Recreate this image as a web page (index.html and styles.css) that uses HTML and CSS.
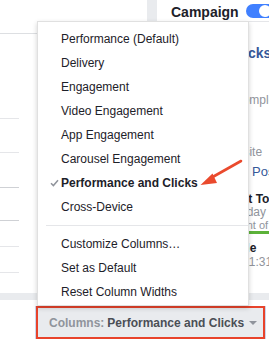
FILE: index.html
```html
<!DOCTYPE html>
<html>
<head>
<meta charset="utf-8">
<link rel="stylesheet" href="styles.css">
</head>
<body>
<div class="app">
  <div class="main">
    <div class="left">
      <div class="left-head"></div>
      <div class="lrow r1"></div>
      <div class="lrow r2"></div>
      <div class="lrow r3 dark"></div>
      <div class="lrow r4 dark"></div>
      <div class="lrow r5"></div>
      <div class="lrow r6"></div>
    </div>
    <div class="gutter"></div>
    <div class="right">
      <div class="rhead">
        <span class="camp">Campaign</span>
        <span class="toggle"><span class="knob"></span></span>
      </div>
      <div class="rt title">Clicks</div>
      <div class="rt grey p-complete">Complete</div>
      <div class="rt grey p-website">Website</div>
      <div class="rt link">Post Engagement</div>
      <div class="rt bold p-spent">Spent Today</div>
      <div class="rt grey p-today">Today</div>
      <div class="rt grey small p-amount">Amount of budget</div>
      <div class="bar"></div>
      <div class="rt bold p-sched">Schedule</div>
      <div class="rt grey p-time">11:31 AM</div>
    </div>
  </div>
  <div class="band"></div>
  <div class="footer">
    <div class="annot">
      <div class="btn"><span class="lbl">Columns:</span><span class="val">Performance and Clicks</span><span class="caret"></span></div>
    </div>
  </div>

  <div class="menu">
    <div class="item">Performance (Default)</div>
    <div class="item">Delivery</div>
    <div class="item">Engagement</div>
    <div class="item">Video Engagement</div>
    <div class="item">App Engagement</div>
    <div class="item">Carousel Engagement</div>
    <div class="item sel"><svg class="check" width="9" height="8" viewBox="0 0 9 8"><polyline points="1,4.2 3.4,6.6 8,1.2" fill="none" stroke="#90949c" stroke-width="1.5"/></svg>Performance and Clicks</div>
    <div class="item">Cross-Device</div>
    <div class="sep"></div>
    <div class="item">Customize Columns…</div>
    <div class="item">Set as Default</div>
    <div class="item">Reset Column Widths</div>
  </div>

  <svg class="arrow" width="269" height="341" viewBox="0 0 269 341">
    <line x1="241" y1="161" x2="210" y2="178.5" stroke="#ea4a2d" stroke-width="2.6" stroke-linecap="round"/>
    <polygon points="200.5,185 212.5,173.5 217,183" fill="#ea4a2d"/>
  </svg>
</div>
</body>
</html>
```

FILE: styles.css
```css
html, body {
  margin: 0;
  padding: 0;
  background: #fff;
}
.app {
  position: relative;
  width: 269px;
  height: 341px;
  overflow: hidden;
  display: flex;
  flex-direction: column;
  font-family: "Liberation Sans", Arial, Helvetica, sans-serif;
  color: #1d2129;
}
.main {
  display: flex;
  height: 293px;
}
.left {
  width: 147px;
  flex: none;
  display: flex;
  flex-direction: column;
}
.left-head {
  height: 33px;
  border-bottom: 1px solid #dddfe2;
}
.lrow {
  width: 19px;
  border-bottom: 1px solid #e5e6e9;
}
.lrow.dark { border-bottom-color: #cfd1d5; }
.r1 { height: 84px; }
.r2 { height: 33px; }
.r3 { height: 34px; }
.r4 { height: 32px; }
.r5 { height: 25px; }
.r6 { height: 25px; }
.gutter {
  width: 10px;
  flex: none;
  background: #e9ebee;
}
.right {
  flex: 1;
  min-width: 0;
  overflow: hidden;
  white-space: nowrap;
  display: flex;
  flex-direction: column;
}
.rhead {
  height: 22px;
  border-bottom: 1px solid #e5e6e9;
  display: flex;
  align-items: center;
  padding-left: 14px;
  padding-top: 2px;
  box-sizing: border-box;
  flex: none;
}
.camp {
  font-size: 14px;
  font-weight: bold;
  color: #1d2129;
  width: 75px;
  flex: none;
}
.toggle {
  position: relative;
  width: 34px;
  height: 14px;
  border-radius: 7px;
  background: #4080ff;
  flex: none;
  margin-top: -2px;
}
.knob {
  position: absolute;
  left: 13px;
  top: 1px;
  width: 12px;
  height: 12px;
  border-radius: 50%;
  background: #fff;
}
.rt {
  font-size: 12px;
  line-height: 14px;
  height: 14px;
  flex: none;
}
.title {
  font-size: 14px;
  font-weight: bold;
  color: #365899;
  margin-top: 24px;
  padding-left: 73px;
}
.grey { color: #90949c; }
.small { font-size: 11px; }
.bold { font-weight: bold; color: #1d2129; }
.link { color: #365899; font-size: 13px; padding-left: 95px; margin-top: 6px; }
.p-complete { margin-top: 33px; padding-left: 77px; }
.p-website { margin-top: 38px; padding-left: 62px; }
.p-spent { margin-top: 14px; padding-left: 62px; line-height: 13px; height: 13px; }
.p-today { padding-left: 77px; line-height: 13px; height: 13px; }
.p-amount { padding-left: 61px; line-height: 12px; height: 12px; }
.bar {
  height: 3px;
  margin-left: 64px;
  background: #5cb239;
  flex: none;
}
.p-sched { margin-top: 7px; padding-left: 46px; }
.p-time { padding-left: 86px; }
.band {
  height: 7px;
  background: #e9ebee;
}
.footer {
  flex: 1;
  padding: 6px 4px 2px 36px;
}
.annot {
  height: 33px;
  border: 2px solid #e8432b;
  box-sizing: border-box;
  box-shadow: 1px 0 0 #c9d6ee, -1px 0 0 #c9d6ee;
}
.btn {
  height: 100%;
  background: #e9ebee;
  display: flex;
  align-items: center;
  padding-left: 11px;
  font-size: 12px;
  font-weight: bold;
  white-space: nowrap;
}
.lbl { color: #90949c; margin-right: 3px; }
.val { color: #4b4f56; }
.caret {
  margin-left: 5px;
  margin-top: 1px;
  width: 0;
  height: 0;
  border-left: 4px solid transparent;
  border-right: 4px solid transparent;
  border-top: 4px solid #90949c;
}
.menu {
  position: absolute;
  left: 37px;
  top: 21px;
  width: 212px;
  height: 285px;
  box-sizing: border-box;
  background: #fff;
  border: 1px solid rgba(0, 0, 0, 0.12);
  box-shadow: 0 2px 5px rgba(0, 0, 0, 0.18);
  padding-top: 5px;
}
.item {
  height: 24px;
  line-height: 24px;
  font-size: 12px;
  color: #1d2129;
  padding-left: 23px;
  position: relative;
  white-space: nowrap;
}
.item.sel { font-weight: bold; }
.check {
  position: absolute;
  left: 12px;
  top: 8px;
}
.sep {
  height: 1px;
  background: #e5e6e9;
  margin: 6px 0 6px 8px;
}
.arrow {
  position: absolute;
  left: 0;
  top: 0;
  pointer-events: none;
}
```
